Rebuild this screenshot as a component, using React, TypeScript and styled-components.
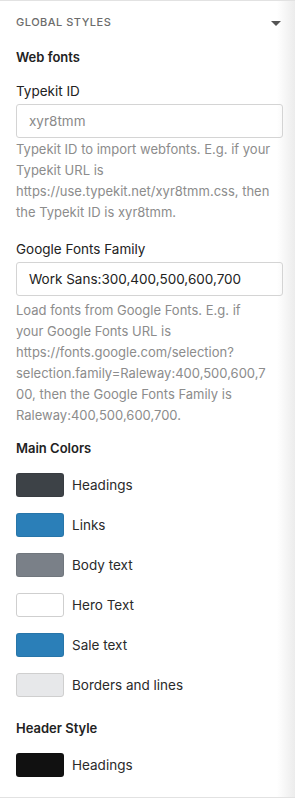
import React from "react";
import styled, { createGlobalStyle } from "styled-components";

const GlobalStyle = createGlobalStyle`
  html, body {
    margin: 0;
    padding: 0;
    background: #fff;
  }
  body {
    font-family: Inter, "Liberation Sans", Arial, sans-serif;
    color: #222;
  }
`;

const Panel = styled.div`
  width: 295px;
  height: 798px;
  box-sizing: border-box;
  border-top: 1px solid #e2e2e2;
  border-bottom: 1px solid #e2e2e2;
  background: linear-gradient(to right, #fff 0, #fff 277px, #ececec 295px);
  padding: 13px 12px 0 16px;
  overflow: hidden;
`;

const Header = styled.div`
  display: flex;
  align-items: center;
  justify-content: space-between;
  height: 16px;
  padding-right: 2px;
`;

const HeaderTitle = styled.div`
  font-size: 11px;
  font-weight: 500;
  letter-spacing: 0.5px;
  color: #6c6c6c;
  text-transform: uppercase;
`;

const Caret = styled.div`
  width: 0;
  height: 0;
  border-left: 5px solid transparent;
  border-right: 5px solid transparent;
  border-top: 5px solid #555;
  margin-top: 2px;
`;

const SectionTitle = styled.div<{ $top: number }>`
  font-size: 13px;
  font-weight: 600;
  color: #222;
  margin-top: ${(p) => p.$top}px;
  line-height: 16px;
`;

const FieldLabel = styled.div<{ $top: number }>`
  font-size: 13.5px;
  color: #222;
  margin-top: ${(p) => p.$top}px;
  line-height: 16px;
`;

const Input = styled.div<{ $placeholder?: boolean }>`
  box-sizing: border-box;
  width: 267px;
  height: 34px;
  margin-top: 5px;
  border: 1px solid #d4d4d4;
  border-radius: 3px;
  padding: 0 12px;
  display: flex;
  align-items: center;
  font-size: 13.5px;
  color: ${(p) => (p.$placeholder ? "#8a8a8a" : "#222")};
`;

const Help = styled.div<{ $top: number }>`
  margin-top: ${(p) => p.$top}px;
  font-size: 13px;
  line-height: 21px;
  color: #8c8c8c;
  white-space: nowrap;
`;

const SwatchList = styled.div`
  display: flex;
  flex-direction: column;
  gap: 16px;
  margin-top: 17px;
`;

const SwatchRow = styled.div`
  display: flex;
  align-items: center;
  gap: 8px;
`;

const Swatch = styled.div<{ $color: string; $bordered?: boolean }>`
  box-sizing: border-box;
  width: 48px;
  height: 24px;
  border-radius: 3px;
  background: ${(p) => p.$color};
  border: 1px solid ${(p) => (p.$bordered ? "#cfcfcf" : "rgba(0,0,0,0.08)")};
`;

const SwatchLabel = styled.span`
  font-size: 13.5px;
  color: #2a2a2a;
`;

const mainColors = [
  { label: "Headings", color: "#3d4247" },
  { label: "Links", color: "#2b7fb8" },
  { label: "Body text", color: "#7a8088" },
  { label: "Hero Text", color: "#ffffff", bordered: true },
  { label: "Sale text", color: "#2b7fb8" },
  { label: "Borders and lines", color: "#e7e8ea", bordered: true },
];

const lines = (ls: string[]) =>
  ls.map((l, i) => (
    <React.Fragment key={i}>
      {l}
      {i < ls.length - 1 && <br />}
    </React.Fragment>
  ));

export default function App() {
  return (
    <>
      <GlobalStyle />
      <Panel>
        <Header>
          <HeaderTitle>Global Styles</HeaderTitle>
          <Caret />
        </Header>

        <SectionTitle $top={19}>Web fonts</SectionTitle>

        <FieldLabel $top={18}>Typekit ID</FieldLabel>
        <Input $placeholder>xyr8tmm</Input>
        <Help $top={1}>
          {lines([
            "Typekit ID to import webfonts. E.g. if your",
            "Typekit URL is",
            "https://use.typekit.net/xyr8tmm.css, then",
            "the Typekit ID is xyr8tmm.",
          ])}
        </Help>

        <FieldLabel $top={18}>Google Fonts Family</FieldLabel>
        <Input>Work Sans:300,400,500,600,700</Input>
        <Help $top={4}>
          {lines([
            "Load fonts from Google Fonts. E.g. if",
            "your Google Fonts URL is",
            "https://fonts.google.com/selection?",
            "selection.family=Raleway:400,500,600,7",
            "00, then the Google Fonts Family is",
            "Raleway:400,500,600,700.",
          ])}
        </Help>

        <SectionTitle $top={14}>Main Colors</SectionTitle>
        <SwatchList>
          {mainColors.map((c) => (
            <SwatchRow key={c.label}>
              <Swatch $color={c.color} $bordered={c.bordered} />
              <SwatchLabel>{c.label}</SwatchLabel>
            </SwatchRow>
          ))}
        </SwatchList>

        <SectionTitle $top={23}>Header Style</SectionTitle>
        <SwatchList>
          <SwatchRow>
            <Swatch $color="#111111" />
            <SwatchLabel>Headings</SwatchLabel>
          </SwatchRow>
        </SwatchList>
      </Panel>
    </>
  );
}
